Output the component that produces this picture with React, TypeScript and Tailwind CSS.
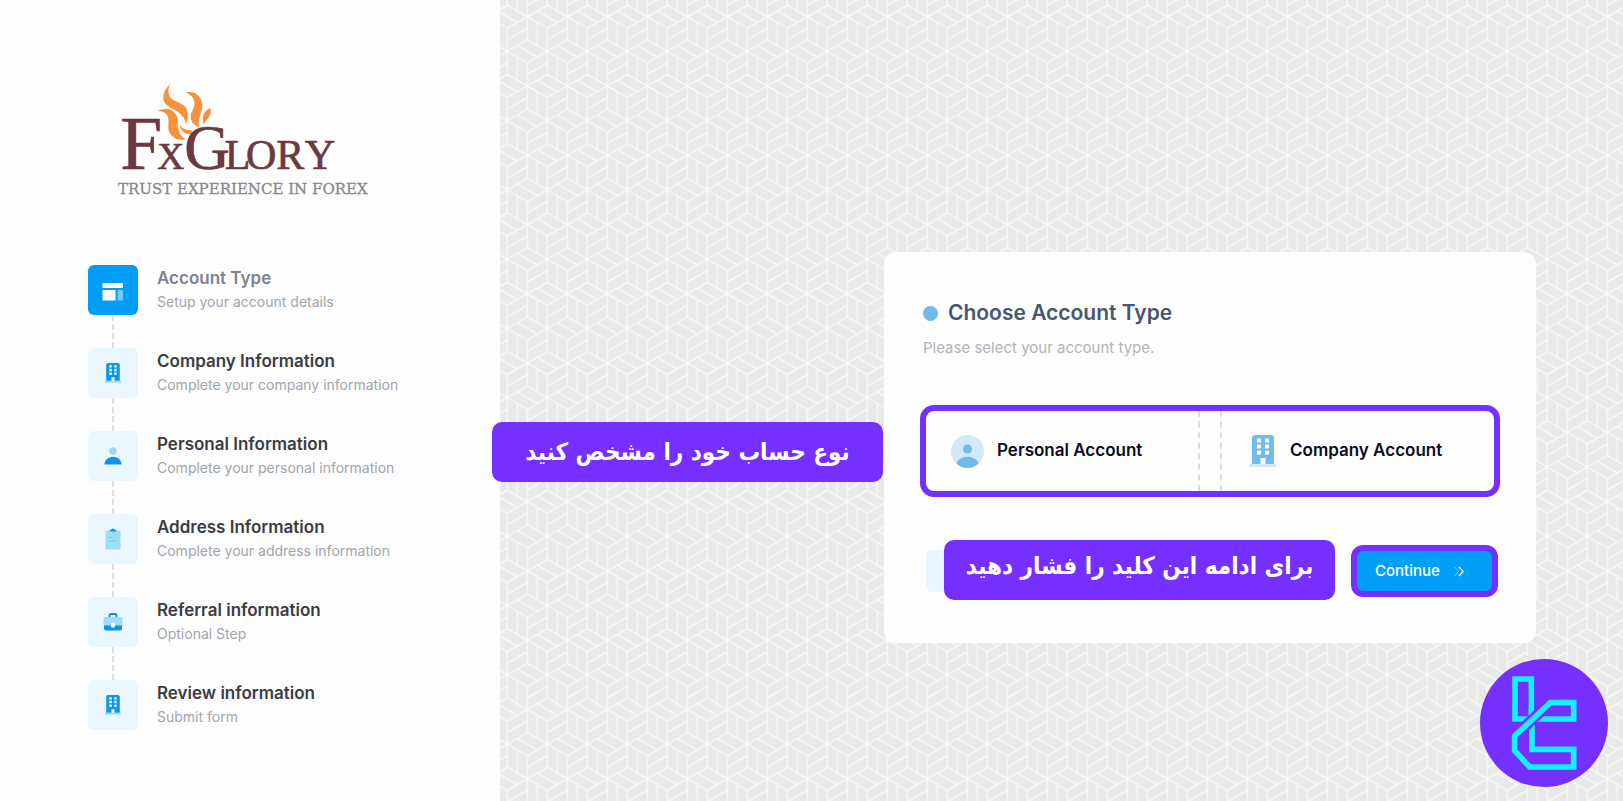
import { ReactNode } from "react";

type Step = {
  title: string;
  description: string;
  icon: ReactNode;
  active?: boolean;
};

function BuildingIcon({ className }: { className?: string }) {
  return (
    <svg viewBox="0 0 26 32" className={className} aria-hidden>
      <rect x="0" y="29" width="26" height="3" fill="currentColor" opacity="0.3" />
      <path
        fillRule="evenodd"
        fill="currentColor"
        d="M5 0H21Q24 0 24 3V29H15.500V23H10.500V29H2V3Q2 0 5 0ZM7 3.500V7.500H11V3.500ZM15 3.500V7.500H19V3.500ZM7 9.500V13.500H11V9.500ZM15 9.500V13.500H19V9.500ZM7 15.500V19.500H11V15.500ZM15 15.500V19.500H19V15.500Z"
      />
    </svg>
  );
}

function LayoutIcon() {
  return (
    <svg viewBox="0 0 22 18" className="mt-1 w-[22px] text-white" aria-hidden>
      <rect x="0.500" y="0" width="20.500" height="5" rx="0.500" fill="currentColor" />
      <rect x="0.500" y="7" width="13" height="10.500" rx="0.500" fill="currentColor" />
      <rect x="15.500" y="7" width="5.500" height="10.500" rx="0.500" fill="currentColor" opacity="0.45" />
    </svg>
  );
}

function PersonIcon() {
  return (
    <svg viewBox="0 0 18 18" className="w-[18px]" aria-hidden>
      <circle cx="9" cy="4" r="3.800" fill="#9bd7f8" />
      <path d="M0.500 17.500C0.500 12.500 4.500 10 9 10S17.500 12.500 17.500 17.500Z" fill="#0a97e6" />
    </svg>
  );
}

function ClipboardIcon() {
  return (
    <svg viewBox="0 0 16 22" className="w-4" aria-hidden>
      <rect x="0.500" y="2.500" width="15" height="19" rx="1" fill="#9fdcfb" />
      <path d="M4.500 3.500Q4.500 1.500 6.500 1.500Q8 -0.500 9.500 1.500Q11.500 1.500 11.500 3.500Z" fill="#0a8fd6" />
      <path d="M3.500 9.500H8M3.500 13H11" stroke="#7cc8ee" />
    </svg>
  );
}

function BriefcaseIcon() {
  return (
    <svg viewBox="0 0 20 18" className="w-5" aria-hidden>
      <path d="M6.500 4V2.500Q6.500 1 8 1H12Q13.500 1 13.500 2.500V4" fill="none" stroke="#0a8fd6" strokeWidth="1.800" />
      <path d="M1 11H19V15.500Q19 17.500 17 17.500H3Q1 17.500 1 15.500Z" fill="#0a97e6" />
      <rect x="0.500" y="4" width="19" height="8.500" rx="1.500" fill="#9fdcfb" />
      <rect x="8" y="9.500" width="4" height="5" rx="0.800" fill="#f2fbff" />
    </svg>
  );
}

const steps: Step[] = [
  {
    title: "Account Type",
    description: "Setup your account details",
    icon: <LayoutIcon />,
    active: true,
  },
  {
    title: "Company Information",
    description: "Complete your company information",
    icon: <BuildingIcon className="w-4 text-[#0a97e6]" />,
  },
  {
    title: "Personal Information",
    description: "Complete your personal information",
    icon: <PersonIcon />,
  },
  {
    title: "Address Information",
    description: "Complete your address information",
    icon: <ClipboardIcon />,
  },
  {
    title: "Referral information",
    description: "Optional Step",
    icon: <BriefcaseIcon />,
  },
  {
    title: "Review information",
    description: "Submit form",
    icon: <BuildingIcon className="w-4 text-[#0a97e6]" />,
  },
];

function Logo() {
  return (
    <svg
      viewBox="0 0 870 420"
      className="w-[290px]"
      role="img"
      aria-label="FxGlory, trust experience in forex"
    >
      <g fill="#f5923e">
        <path d="M211 43C203 56 203 74 212 84C225 96 246 98 257 112C267 127 264 147 257 161C254 144 246 133 229 122C207 112 191 103 190 84C190 65 201 52 211 43Z" />
        <path d="M257 67C283 62 303 76 307 102C308 127 293 143 297 171C281 165 271 153 272 138C273 124 285 115 283 98C281 81 270 73 257 67Z" />
        <path d="M172 122C199 113 219 116 229 136C237 154 229 168 238 186C243 197 249 203 257 208C233 214 214 202 207 184C202 168 209 152 203 138C197 127 186 123 172 122Z" />
        <path d="M238 165C248 177 261 182 278 181L273 191C256 195 242 182 238 165Z" />
        <path d="M331 114C337 139 319 147 311 163C304 141 311 123 331 114Z" />
      </g>
      <g fill="#6b3a40" stroke="#6b3a40" strokeWidth="2" fontFamily="Liberation Serif, serif">
        <text y="298">
          <tspan x="61" fontSize="226">F</tspan>
          <tspan x="172" fontSize="112">X</tspan>
          <tspan x="253" fontSize="190">G</tspan>
          <tspan x="374" fontSize="126">L</tspan>
          <tspan x="438" fontSize="126">O</tspan>
          <tspan x="529" fontSize="126">R</tspan>
          <tspan x="614" fontSize="126">Y</tspan>
        </text>
      </g>
      <text
        x="54"
        y="373"
        fontSize="45"
        fill="#8a8a8a"
        stroke="#8a8a8a"
        strokeWidth="1"
        fontFamily="DejaVu Serif, serif"
      >
        TRUST EXPERIENCE IN FOREX
      </text>
    </svg>
  );
}

/** Isometric cube lattice behind the form */
function CubePattern() {
  return (
    <svg className="absolute inset-0 h-full w-full" aria-hidden>
      <defs>
        <pattern id="cubes" x="27.300" y="16.700" width="40" height="69.280" patternUnits="userSpaceOnUse">
          <g fill="none" stroke="#fbfbfb" strokeWidth="1.300">
            <g id="cube">
              <path d="M0 0V23.090M0 0L20 11.550M0 0L-20 11.550M20 11.550V34.640M0 23.090L20 34.640M0 23.090L-20 34.640M10 5.770V28.870M-20 23.090L0 11.550M-10 28.870L10 40.410" />
            </g>
            <use href="#cube" x="40" />
            <use href="#cube" x="20" y="34.640" />
            <use href="#cube" x="-20" y="34.640" />
            <use href="#cube" x="60" y="34.640" />
            <use href="#cube" x="20" y="-34.640" />
            <use href="#cube" x="0" y="69.280" />
            <use href="#cube" x="40" y="69.280" />
          </g>
        </pattern>
      </defs>
      <rect width="100%" height="100%" fill="url(#cubes)" />
    </svg>
  );
}

function Callout({ children, className }: { children: ReactNode; className: string }) {
  return (
    <p
      dir="rtl"
      lang="fa"
      className={`absolute flex h-[60px] w-[391px] items-center justify-center rounded-[10px] bg-[#752fff] font-['DejaVu_Sans_Condensed','DejaVu_Sans',sans-serif] text-2xl font-bold whitespace-nowrap text-white ${className}`}
    >
      {children}
    </p>
  );
}

function Badge() {
  return (
    <svg viewBox="60 57 384 384" className="absolute right-[15px] bottom-[14px] w-32" aria-hidden>
      <circle cx="252" cy="249" r="192" fill="#752fff" />
      <g fill="none" stroke="#14f1ff" strokeWidth="17">
        <path d="M214 238V117H165V237H210" />
        <path d="M230 237H262M216 250V282" />
        <path d="M262 196L174 279" stroke="#752fff" strokeWidth="32" />
        <path d="M256 237H341V188H271L164 288V332L209 381H341V328H216V276" />
      </g>
    </svg>
  );
}

export default function App() {
  return (
    <div className="relative flex min-h-screen bg-[#e8e9e9] font-['Inter',sans-serif]">
      <aside className="w-[500px] shrink-0 bg-[#fdfdfd] pt-[70px]">
        <div className="pl-[100px]">
          <Logo />
        </div>
        <ol className="mt-[55px] pl-[88px]">
          {steps.map((step, index) => (
            <li key={step.title} className="flex gap-[19px]">
              <div className="flex flex-col items-center">
                <div
                  className={`flex size-[50px] items-center justify-center rounded-md ${
                    step.active ? "bg-[#009ef7]" : "bg-[#ebf7ff]"
                  }`}
                >
                  {step.icon}
                </div>
                {index < steps.length - 1 && (
                  <div className="h-[33px] border-l-2 border-dashed border-[#dfe0e2]" />
                )}
              </div>
              <div className="pt-px">
                <h3
                  className={`text-[17px] leading-6 font-semibold ${
                    step.active ? "text-[#7e8190]" : "text-[#3b3c43]"
                  }`}
                >
                  {step.title}
                </h3>
                <p className="text-sm leading-6 text-[#a1a5ab]">{step.description}</p>
              </div>
            </li>
          ))}
        </ol>
      </aside>

      <main className="relative flex flex-1 items-start justify-end pt-[252px] pr-[87px]">
        <CubePattern />
        <section className="relative w-[652px] rounded-xl bg-[#fdfdfd] px-9 pt-[45px] pb-[46px]">
          <h1 className="flex items-center gap-[10px] pl-[3px] text-[21px] leading-8 font-semibold text-[#48566e]">
            <span className="size-[15px] rounded-full bg-[#70bbe8]" />
            Choose Account Type
          </h1>
          <p className="mt-[7px] pl-[3px] text-[15px] leading-6 text-[#b2b4bb]">
            Please select your account type.
          </p>

          <div className="mt-[45px] grid h-[92px] grid-cols-2 gap-5 rounded-[14px] border-[6px] border-[#752fff]">
            <button
              type="button"
              className="flex items-center gap-[13px] border-r-2 border-dashed border-[#dcdde0] pl-[25px] text-[17px] font-semibold text-[#0b0b22]"
            >
              <svg viewBox="0 0 33 33" className="w-[33px]" aria-hidden>
                <circle cx="16.500" cy="16.500" r="16.500" fill="#d2e9f6" />
                <circle cx="16.500" cy="14" r="4.500" fill="#70bbe8" />
                <path d="M5.500 28.500C8 19.500 25 19.500 27.500 28.500Q22.500 33 16.500 33T5.500 28.500Z" fill="#70bbe8" />
              </svg>
              Personal Account
            </button>
            <button
              type="button"
              className="flex items-center gap-[14px] border-l-2 border-dashed border-[#dcdde0] pl-[28px] text-[17px] font-semibold text-[#0b0b22]"
            >
              <BuildingIcon className="w-[26px] text-[#70bbe8]" />
              Company Account
            </button>
          </div>

          <div className="relative mt-12 flex items-center justify-between">
            <button type="button" aria-label="Back" className="ml-[6px] h-[42px] w-24 rounded-md bg-[#e9f6ff]" />
            <button
              type="button"
              className="mr-[2px] flex h-[52px] w-[147px] items-center gap-[14px] rounded-xl border-[6px] border-[#752fff] bg-[#009ef7] pl-[18px] text-[15px] font-medium text-white"
            >
              Continue
              <svg viewBox="0 0 10 11" className="w-[10px]" fill="none" stroke="currentColor" aria-hidden>
                <path d="M0.500 1L4.500 5.500L0.500 10" opacity="0.5" />
                <path d="M5 1L9.200 5.500L5 10" strokeWidth="1.300" />
              </svg>
            </button>
            <Callout className="-top-[5px] left-6 pb-2">برای ادامه این کلید را فشار دهید</Callout>
          </div>
          <Callout className="top-[170px] right-full mr-px">نوع حساب خود را مشخص کنید</Callout>
        </section>
      </main>

      <Badge />
    </div>
  );
}
